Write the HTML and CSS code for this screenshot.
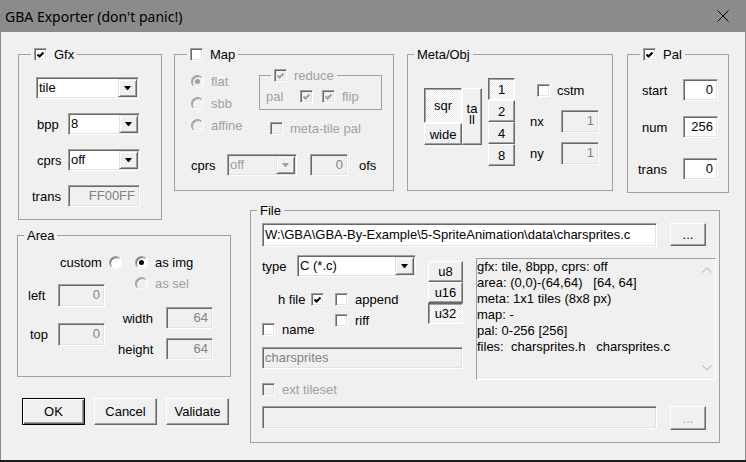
FILE: index.html
```html
<!DOCTYPE html>
<html lang="en">
<head>
<meta charset="utf-8">
<title>GBA Exporter</title>
<link rel="stylesheet" href="styles.css">
</head>
<body>
<div class="window">
  <div class="titlebar">
    <span class="title">GBA Exporter (don't panic!)</span>
    <svg class="close" width="12" height="12" viewBox="0 0 12 12"><path d="M0.5 0.5L11.5 11.5M11.5 0.5L0.5 11.5"/></svg>
  </div>
  <div class="content">
    <!-- Gfx -->
    <div class="group gfx">
      <div class="gtitle chk"><span class="cb"><svg viewBox="0 0 11 11"><path d="M2.5 5.5L4.5 7.5L8.5 3.5"/></svg></span><span>Gfx</span></div>
      <div class="gfx-body">
        <div class="combo w-tile"><span class="val">tile</span><span class="dd"><svg width="7" height="4" viewBox="0 0 7 4"><path d="M0 0H7L4 4H3Z"/></svg></span></div>
        <div class="frow"><span class="flbl">bpp</span><div class="combo w-gfx"><span class="val">8</span><span class="dd"><svg width="7" height="4" viewBox="0 0 7 4"><path d="M0 0H7L4 4H3Z"/></svg></span></div></div>
        <div class="frow"><span class="flbl">cprs</span><div class="combo w-gfx"><span class="val">off</span><span class="dd"><svg width="7" height="4" viewBox="0 0 7 4"><path d="M0 0H7L4 4H3Z"/></svg></span></div></div>
        <div class="frow"><span class="flbl flbl-t">trans</span><div class="edit ro num w-gfx">FF00FF</div></div>
      </div>
    </div>

    <div class="toprow">
      <!-- Map -->
      <div class="group map">
        <div class="gtitle chk"><span class="cb"></span><span>Map</span></div>
        <div class="map-body">
          <div class="map-top">
            <div class="radios">
              <div class="ritem"><span class="rb dis on"></span><span class="rlbl dis-t">flat</span></div>
              <div class="ritem"><span class="rb dis"></span><span class="rlbl dis-t">sbb</span></div>
              <div class="ritem"><span class="rb dis"></span><span class="rlbl dis-t">affine</span></div>
            </div>
            <div class="reduce-col">
              <div class="subgroup">
                <div class="gtitle chk sub-title"><span class="cb dis"><svg viewBox="0 0 11 11"><path d="M2.5 5.5L4.5 7.5L8.5 3.5"/></svg></span><span class="dis-t">reduce</span></div>
                <div class="sg-row">
                  <span class="sg-lbl dis-t">pal</span>
                  <span class="cb dis"><svg viewBox="0 0 11 11"><path d="M2.5 5.5L4.5 7.5L8.5 3.5"/></svg></span>
                  <span class="cb dis cb-flip"><svg viewBox="0 0 11 11"><path d="M2.5 5.5L4.5 7.5L8.5 3.5"/></svg></span>
                  <span class="cblbl dis-t">flip</span>
                </div>
              </div>
              <div class="mt-pal"><span class="cb dis"></span><span class="cblbl dis-t">meta-tile pal</span></div>
            </div>
          </div>
          <div class="map-bottom">
            <span class="mb-lbl">cprs</span>
            <div class="combo dis w-mcprs"><span class="val">off</span><span class="dd"><svg width="7" height="4" viewBox="0 0 7 4"><path d="M0 0H7L4 4H3Z"/></svg></span></div>
            <div class="edit ro num w-ofs">0</div>
            <span class="ofs-lbl">ofs</span>
          </div>
        </div>
      </div>

      <!-- Meta/Obj -->
      <div class="group meta">
        <div class="gtitle"><span>Meta/Obj</span></div>
        <div class="meta-body">
          <div class="shape">
            <div class="shape-l">
              <div class="btn pressed b-sqr">sqr</div>
              <div class="btn b-wide">wide</div>
            </div>
            <div class="btn b-tall"><span class="tall-t">tall</span></div>
          </div>
          <div class="nums">
            <div class="btn pressed b-num">1</div>
            <div class="btn b-num">2</div>
            <div class="btn b-num">4</div>
            <div class="btn b-num">8</div>
          </div>
          <div class="meta-right">
            <div class="cstm-row"><span class="cb"></span><span class="cblbl">cstm</span></div>
            <div class="nrow nx"><span class="nlbl">nx</span><div class="edit ro num w-n">1</div></div>
            <div class="nrow ny"><span class="nlbl">ny</span><div class="edit ro num w-n">1</div></div>
          </div>
        </div>
      </div>

      <!-- Pal -->
      <div class="group pal">
        <div class="gtitle chk"><span class="cb"><svg viewBox="0 0 11 11"><path d="M2.5 5.5L4.5 7.5L8.5 3.5"/></svg></span><span>Pal</span></div>
        <div class="pal-body">
          <div class="prow"><span class="plbl">start</span><div class="edit num w-p">0</div></div>
          <div class="prow pn"><span class="plbl">num</span><div class="edit num w-p">256</div></div>
          <div class="prow pt"><span class="plbl tr">trans</span><div class="edit num w-p">0</div></div>
        </div>
      </div>
    </div>

    <!-- Area -->
    <div class="group area">
      <div class="gtitle"><span>Area</span></div>
      <div class="area-body">
        <div class="arow1">
          <span class="custom-lbl">custom</span>
          <span class="rb"></span>
          <span class="rb on r2"></span>
          <span class="rlbl">as img</span>
        </div>
        <div class="area-cols">
          <div class="acol-l">
            <div class="arow"><span class="albl">left</span><div class="edit ro num w-a">0</div></div>
            <div class="arow"><span class="albl top">top</span><div class="edit ro num w-a">0</div></div>
          </div>
          <div class="acol-r">
            <div class="assel"><span class="rb dis"></span><span class="rlbl dis-t">as sel</span></div>
            <div class="arow aw"><span class="arlbl">width</span><div class="edit ro num w-a2">64</div></div>
            <div class="arow ah"><span class="arlbl">height</span><div class="edit ro num w-a2">64</div></div>
          </div>
        </div>
      </div>
    </div>

    <!-- File -->
    <div class="group file">
      <div class="gtitle"><span>File</span></div>
      <div class="file-body">
        <div class="frowA">
          <div class="edit w-path">W:\GBA\GBA-By-Example\5-SpriteAnimation\data\charsprites.c</div>
          <div class="btn b-dots">...</div>
        </div>
        <div class="frowB">
          <div class="fleft">
            <div class="fupper">
              <div class="fctrls">
                <div class="type-row">
                  <span class="type-lbl">type</span>
                  <div class="combo w-type"><span class="val">C (*.c)</span><span class="dd"><svg width="7" height="4" viewBox="0 0 7 4"><path d="M0 0H7L4 4H3Z"/></svg></span></div>
                </div>
                <div class="hfile-row">
                  <span class="hf-lbl">h file</span>
                  <span class="cb"><svg viewBox="0 0 11 11"><path d="M2.5 5.5L4.5 7.5L8.5 3.5"/></svg></span>
                  <span class="cb append-cb"></span>
                  <span class="cblbl">append</span>
                </div>
                <div class="nr-row">
                  <div class="name-grp"><span class="cb"></span><span class="cblbl">name</span></div>
                  <div class="riff-grp"><span class="cb"></span><span class="cblbl">riff</span></div>
                </div>
              </div>
              <div class="ubtns">
                <div class="btn b-u">u8</div>
                <div class="btn b-u">u16</div>
                <div class="btn pressed b-u">u32</div>
              </div>
            </div>
            <div class="edit ro w-cs">charsprites</div>
          </div>
          <div class="info">
            <div class="info-text">gfx: tile, 8bpp, cprs: off
area: (0,0)-(64,64)   [64, 64]
meta: 1x1 tiles (8x8 px)
map: -
pal: 0-256 [256]
files:  charsprites.h   charsprites.c</div>
            <div class="info-scroll">
              <svg width="10" height="6" viewBox="0 0 10 6"><path d="M0.5 5.5L5 1L9.5 5.5"/></svg>
              <svg width="10" height="6" viewBox="0 0 10 6"><path d="M0.5 0.5L5 5L9.5 0.5"/></svg>
            </div>
          </div>
        </div>
        <div class="ext-row"><span class="cb dis"></span><span class="cblbl dis-t">ext tileset</span></div>
        <div class="frowC">
          <div class="edit ro w-ext"></div>
          <div class="btn b-dots2 dis-t">...</div>
        </div>
      </div>
    </div>

    <!-- Dialog buttons -->
    <div class="buttons">
      <div class="btn default b-dlg">OK</div>
      <div class="btn b-dlg">Cancel</div>
      <div class="btn b-dlg">Validate</div>
    </div>
  </div>
</div>
</body>
</html>
```

FILE: styles.css
```css
* { box-sizing: border-box; margin: 0; padding: 0; }
html, body { width: 746px; height: 462px; }
body {
  background: #1c1c1c;
  overflow: hidden;
  font-family: "Liberation Sans", Arial, sans-serif;
  font-size: 13px;
  line-height: 15px;
  color: #000;
}
.window {
  width: 746px;
  height: 460px;
  background: #f0f0f0;
  border-left: 1px solid #8b8b8b;
  border-right: 1px solid #8b8b8b;
  display: flex;
  flex-direction: column;
}
.titlebar {
  height: 32px;
  flex: none;
  background: #8b8b8b;
  display: flex;
  align-items: center;
  justify-content: space-between;
  padding: 0 16px 0 4px;
}
.title {
  font-family: "Noto Sans", "Open Sans", sans-serif;
  font-size: 14px;
  color: #000;
}
.close { display: block; }
.close path { stroke: #000; stroke-width: 1; fill: none; }

.content {
  flex: 1;
  display: grid;
  grid-template-columns: 157px 76px 479px;
  grid-template-rows: 156px 25px 142px 1fr;
  padding: 22px 0 0 16px;
  align-items: start;
}

/* group boxes */
.group { position: relative; border: 1px solid #a0a0a0; }
.gtitle {
  position: absolute;
  top: -9px;
  left: 6px;
  height: 17px;
  padding: 0 3px;
  background: #f0f0f0;
  display: flex;
  align-items: center;
  white-space: nowrap;
}
.gtitle.chk { left: 12px; }
.gtitle .cb { margin-right: 7px; }

/* checkbox */
.cb {
  display: inline-block;
  flex: none;
  width: 13px;
  height: 13px;
  border: 1px solid;
  border-color: #a0a0a0 #fff #fff #a0a0a0;
  box-shadow: inset 1px 1px 0 #696969, inset -1px -1px 0 #e3e3e3;
  background: #fff;
}
.cb svg { display: block; width: 11px; height: 11px; }
.cb path { fill: none; stroke: #000; stroke-width: 2.1; }
.cb.dis { background: #f0f0f0; }
.cb.dis path { stroke: #a0a0a0; }
.cblbl { margin-left: 7px; white-space: nowrap; }

/* radio */
.rb {
  display: inline-block;
  flex: none;
  position: relative;
  width: 13px;
  height: 13px;
  border-radius: 50%;
  border: 1px solid;
  border-color: #a0a0a0 #fff #fff #a0a0a0;
  box-shadow: inset 1px 1px 0 #696969;
  background: #fff;
}
.rb.on::after {
  content: "";
  position: absolute;
  left: 3px;
  top: 3px;
  width: 5px;
  height: 5px;
  border-radius: 50%;
  background: #000;
}
.rb.dis { background: #f0f0f0; box-shadow: inset 1px 1px 0 #a0a0a0; }
.rb.dis.on::after { background: #a0a0a0; }
.rlbl { margin-left: 7px; white-space: nowrap; }
.dis-t { color: #a0a0a0; }

/* edit box */
.edit {
  flex: none;
  height: 22px;
  border: 1px solid;
  border-color: #a0a0a0 #fff #fff #a0a0a0;
  box-shadow: inset 1px 1px 0 #696969, inset -1px -1px 0 #e3e3e3;
  background: #fff;
  padding: 0 4px 0 2px;
  line-height: 20px;
  white-space: nowrap;
  overflow: hidden;
}
.edit.num { text-align: right; }
.edit.ro { background: #f0f0f0; color: #838383; }

/* combo box */
.combo {
  flex: none;
  display: flex;
  height: 22px;
  border: 1px solid;
  border-color: #a0a0a0 #fff #fff #a0a0a0;
  box-shadow: inset 1px 1px 0 #696969, inset -1px -1px 0 #e3e3e3;
  background: #fff;
  padding: 1px;
}
.combo .val { flex: 1; line-height: 18px; padding-left: 1px; white-space: nowrap; }
.combo .dd {
  width: 19px;
  display: flex;
  align-items: center;
  justify-content: center;
  border: 1px solid;
  border-color: #e3e3e3 #696969 #696969 #e3e3e3;
  box-shadow: inset 1px 1px 0 #fff, inset -1px -1px 0 #a0a0a0;
  background: #f0f0f0;
}
.combo .dd svg { display: block; }
.combo .dd path { fill: #000; }
.combo.dis { background: #f0f0f0; color: #a0a0a0; }
.combo.dis .dd path { fill: #a0a0a0; }

/* push buttons */
.btn {
  flex: none;
  display: flex;
  align-items: center;
  justify-content: center;
  border: 1px solid;
  border-color: #fff #696969 #696969 #fff;
  box-shadow: inset -1px -1px 0 #a0a0a0;
  background: #f0f0f0;
  white-space: nowrap;
}
.btn.pressed {
  border-color: #696969 #fff #fff #696969;
  box-shadow: inset 1px 1px 0 #a0a0a0;
  background: repeating-conic-gradient(#fff 0 25%, #ebebeb 0 50%) 0 0 / 2px 2px;
}
.btn.default {
  border-color: #000;
  box-shadow: inset 1px 1px 0 #fff, inset -1px -1px 0 #696969, inset -2px -2px 0 #a0a0a0;
}

/* Gfx */
.gfx { grid-column: 1; grid-row: 1 / 3; margin-left: 1px; width: 144px; height: 166px; }
.gfx-body { padding: 22px 0 0 17px; }
.w-tile { width: 103px; }
.frow { display: flex; align-items: center; margin-top: 14px; }
.flbl { width: 32px; padding-left: 1px; }
.flbl-t { width: 36px; margin-left: -4px; padding-left: 0; }
.w-gfx { width: 72px; }

/* top row */
.toprow { grid-column: 2 / 4; grid-row: 1; display: flex; align-items: flex-start; }
.map { width: 220px; height: 137px; margin-right: 13px; }
.meta { width: 206px; height: 137px; margin-right: 14px; }
.pal { width: 102px; height: 139px; }

/* Map */
.map-body { padding: 20px 0 0 16px; }
.map-top { display: flex; align-items: flex-start; }
.radios { width: 68px; display: flex; flex-direction: column; gap: 9px; }
.ritem { display: flex; align-items: center; height: 13px; }
.reduce-col { width: 123px; }
.subgroup { position: relative; height: 35px; border: 1px solid #a0a0a0; padding: 14px 0 0 6px; }
.gtitle.sub-title { left: 11px; }
.sg-row { display: flex; align-items: center; height: 13px; }
.sg-lbl { width: 34px; }
.cb-flip { margin-left: 9px; }
.mt-pal { display: flex; align-items: center; height: 13px; margin: 12px 0 0 11px; }
.map-bottom { display: flex; align-items: center; margin-top: 19px; }
.mb-lbl { width: 36px; }
.w-mcprs { width: 70px; }
.w-ofs { width: 38px; margin-left: 13px; }
.ofs-lbl { margin-left: 11px; }

/* Meta/Obj */
.meta-body { padding: 23px 0 0 16px; display: flex; align-items: flex-start; }
.shape { display: flex; margin-top: 10px; }
.shape-l { display: flex; flex-direction: column; }
.b-sqr { width: 38px; height: 35px; }
.b-wide { width: 38px; height: 22px; }
.b-tall { width: 20px; height: 57px; padding-bottom: 6px; }
.tall-t {
  display: block;
  width: 13px;
  white-space: normal;
  word-break: break-all;
  line-height: 11px;
  text-align: center;
}
.nums { display: flex; flex-direction: column; margin-left: 6px; }
.b-num { width: 27px; height: 22px; }
.meta-right { margin-left: 15px; }
.cstm-row { display: flex; align-items: center; height: 13px; margin: 6px 0 0 7px; }
.nrow { display: flex; align-items: center; }
.nrow.nx { margin-top: 13px; }
.nrow.ny { margin-top: 9px; }
.nlbl { width: 31px; }
.w-n { width: 38px; height: 23px; }

/* Pal */
.pal-body { padding: 24px 0 0 14px; }
.prow { display: flex; align-items: center; }
.prow.pn { margin-top: 15px; }
.prow.pt { margin-top: 20px; }
.plbl { width: 41px; }
.plbl.tr { width: 45px; margin-left: -4px; }
.w-p { width: 35px; }

/* Area */
.area { grid-column: 1 / 3; grid-row: 3; width: 214px; height: 142px; }
.area-body { padding-top: 20px; }
.arow1 { display: flex; align-items: center; height: 13px; padding-left: 42px; }
.custom-lbl { width: 49px; }
.rb.r2 { margin-left: 13px; }
.area-cols { display: flex; align-items: flex-start; }
.acol-l { margin-top: 15px; padding-left: 10px; }
.arow { display: flex; align-items: center; }
.acol-l .arow + .arow { margin-top: 16px; }
.albl { width: 30px; }
.albl.top { padding-left: 2px; }
.w-a { width: 47px; height: 23px; }
.acol-r { margin: 8px 0 0 13px; }
.assel { display: flex; align-items: center; height: 13px; padding-left: 17px; }
.arow.aw { margin-top: 17px; }
.arow.ah { margin-top: 9px; }
.arlbl { width: 48px; text-align: right; padding-right: 13px; }
.w-a2 { width: 47px; height: 22px; }

/* File */
.file { grid-column: 3; grid-row: 2 / 5; width: 470px; height: 233px; }
.file-body { padding: 12px 0 0 11px; }
.frowA { display: flex; align-items: flex-start; }
.w-path { width: 395px; height: 24px; line-height: 22px; }
.b-dots { width: 36px; height: 23px; margin-left: 13px; }
.frowB { display: flex; align-items: flex-start; margin-top: 8px; }
.fleft { width: 201px; }
.fupper { display: flex; align-items: flex-start; }
.fctrls { width: 166px; }
.type-row { display: flex; align-items: center; }
.type-lbl { width: 35px; }
.w-type { width: 119px; }
.hfile-row { display: flex; align-items: center; height: 13px; margin-top: 16px; padding-left: 16px; }
.hf-lbl { width: 33px; }
.append-cb { margin-left: 11px; }
.nr-row { display: flex; align-items: flex-start; }
.name-grp { width: 73px; display: flex; align-items: center; height: 13px; margin-top: 17px; }
.riff-grp { display: flex; align-items: center; height: 13px; margin-top: 8px; }
.ubtns { display: flex; flex-direction: column; margin-top: 6px; }
.b-u { width: 35px; height: 21px; }
.w-cs { width: 201px; margin-top: 11px; }
.info {
  display: flex;
  width: 240px;
  height: 122px;
  margin: 3px 0 0 13px;
  border: 1px solid;
  border-color: #a0a0a0 #fff #fff #a0a0a0;
  background: #f0f0f0;
}
.info-text { flex: 1; white-space: pre; line-height: 16px; }
.info-scroll {
  width: 17px;
  display: flex;
  flex-direction: column;
  justify-content: space-between;
  align-items: center;
  padding: 8px 0;
}
.info-scroll svg { display: block; }
.info-scroll path { fill: none; stroke: #c4c4c4; stroke-width: 1.2; }
.ext-row { display: flex; align-items: center; height: 13px; margin-top: 3px; }
.frowC { display: flex; align-items: flex-start; margin-top: 10px; }
.w-ext { width: 395px; height: 23px; }
.b-dots2 { width: 36px; height: 24px; margin-left: 13px; }

/* dialog buttons */
.buttons { grid-column: 1 / 3; grid-row: 4; display: flex; gap: 9px; margin: 21px 0 0 5px; }
.b-dlg { width: 63px; height: 27px; }
```
